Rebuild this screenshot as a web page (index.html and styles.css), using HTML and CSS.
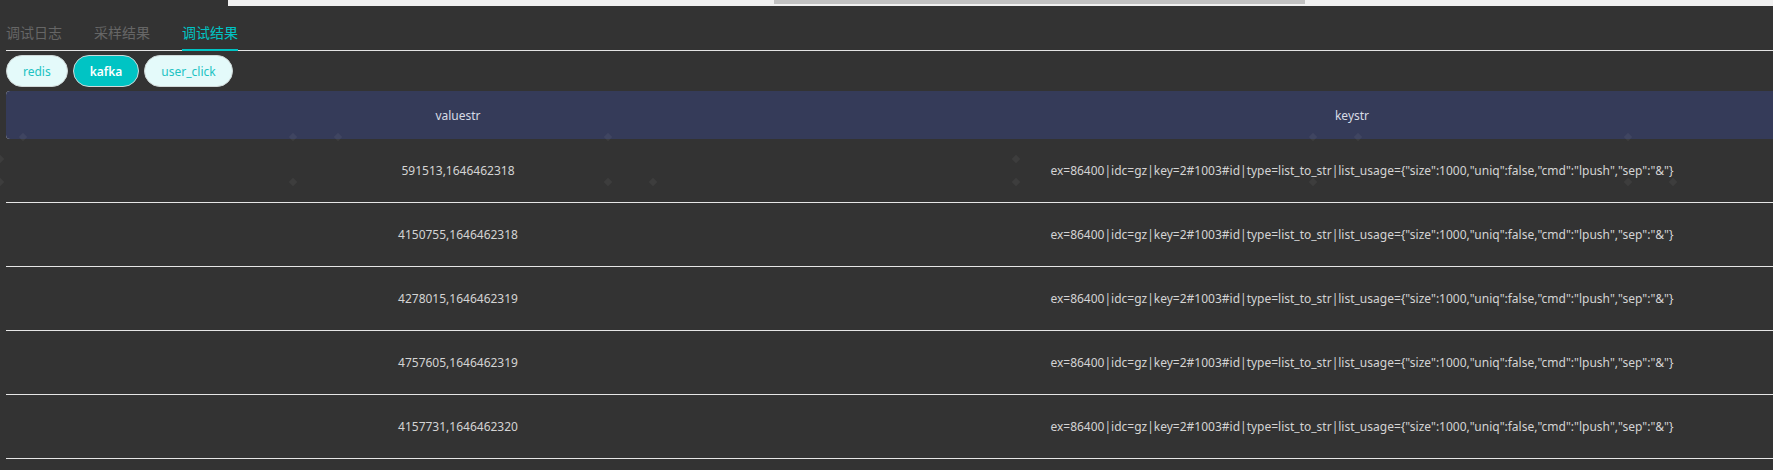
FILE: index.html
```html
<!DOCTYPE html>
<html lang="zh-CN">
<head>
  <meta charset="UTF-8" />
  <meta name="viewport" content="width=device-width, initial-scale=1.0"/>
  <title>调试结果</title>
  <link rel="stylesheet" href="styles.css">
</head>
<body>
  <div class="topbar">
    <div class="topbar-gap"></div>
    <div class="topbar-track"><div class="topbar-thumb"></div></div>
  </div>

  <div class="page">
    <div class="tabs">
      <div class="tab">调试日志</div>
      <div class="tab">采样结果</div>
      <div class="tab active">调试结果</div>
    </div>

    <div class="pills">
      <button class="pill">redis</button>
      <button class="pill active">kafka</button>
      <button class="pill">user_click</button>
    </div>

    <div class="table-wrap">
      <table class="result">
        <thead>
          <tr>
            <th>valuestr</th>
            <th>keystr</th>
          </tr>
        </thead>
        <tbody>
          <tr>
            <td>591513,1646462318</td>
            <td>ex=86400|idc=gz|key=2#1003#id|type=list_to_str|list_usage={"size":1000,"uniq":false,"cmd":"lpush","sep":"&amp;"}</td>
          </tr>
          <tr>
            <td>4150755,1646462318</td>
            <td>ex=86400|idc=gz|key=2#1003#id|type=list_to_str|list_usage={"size":1000,"uniq":false,"cmd":"lpush","sep":"&amp;"}</td>
          </tr>
          <tr>
            <td>4278015,1646462319</td>
            <td>ex=86400|idc=gz|key=2#1003#id|type=list_to_str|list_usage={"size":1000,"uniq":false,"cmd":"lpush","sep":"&amp;"}</td>
          </tr>
          <tr>
            <td>4757605,1646462319</td>
            <td>ex=86400|idc=gz|key=2#1003#id|type=list_to_str|list_usage={"size":1000,"uniq":false,"cmd":"lpush","sep":"&amp;"}</td>
          </tr>
          <tr>
            <td>4157731,1646462320</td>
            <td>ex=86400|idc=gz|key=2#1003#id|type=list_to_str|list_usage={"size":1000,"uniq":false,"cmd":"lpush","sep":"&amp;"}</td>
          </tr>
        </tbody>
      </table>
    </div>
  </div>

  <!-- faint background particles -->
  <div class="particles">
    <i style="left:23px;top:137px"></i>
    <i style="left:293px;top:137px"></i>
    <i style="left:338px;top:137px"></i>
    <i style="left:608px;top:137px"></i>
    <i style="left:0px;top:159px"></i>
    <i style="left:0px;top:182px"></i>
    <i style="left:293px;top:182px"></i>
    <i style="left:608px;top:182px"></i>
    <i style="left:653px;top:182px"></i>
    <i style="left:1016px;top:159px"></i>
    <i style="left:1016px;top:182px"></i>
    <i style="left:1313px;top:137px"></i>
    <i style="left:1358px;top:137px"></i>
    <i style="left:1313px;top:182px"></i>
    <i style="left:1628px;top:137px"></i>
    <i style="left:1628px;top:182px"></i>
    <i style="left:1673px;top:182px"></i>
  </div>
</body>
</html>
```

FILE: styles.css
```css
html, body {
  margin: 0;
  padding: 0;
  overflow: hidden;
}
body {
  font-family: "Noto Sans", "Noto Sans CJK SC", sans-serif;
  background-color: #333333;
  color: #d6d6d6;
  position: relative;
}
.topbar {
  display: flex;
  height: 6px;
}
.topbar-gap {
  width: 228px;
}
.topbar-track {
  flex: 1;
  background-color: #f0f0f0;
  padding-left: 546px;
}
.topbar-thumb {
  width: 531px;
  height: 4px;
  background-color: #c1c1c1;
}
.page {
  padding-left: 6px;
}
.tabs {
  display: flex;
  gap: 32px;
  height: 44px;
  border-bottom: 1px solid #e4e4e4;
}
.tab {
  font-family: "Noto Sans CJK SC", sans-serif;
  font-size: 14px;
  line-height: 14px;
  padding-top: 19px;
  color: #666666;
  box-sizing: border-box;
  height: 45px;
}
.tab.active {
  color: #00c4c4;
  border-bottom: 2px solid #00c4c4;
}
.pills {
  display: flex;
  gap: 5px;
  margin-top: 4px;
}
.pill {
  font-family: "Noto Sans", sans-serif;
  font-size: 12px;
  height: 32px;
  padding: 0 16px;
  border: 1px solid #cfd8d8;
  border-radius: 16px;
  background-color: #e4fafa;
  color: #20c2c2;
  cursor: pointer;
}
.pill.active {
  background-color: #00c4c4;
  color: #ffffff;
  font-weight: 600;
}
.table-wrap {
  margin-top: 4px;
  overflow: hidden;
}
.result {
  width: 1808px;
  table-layout: fixed;
  border-collapse: collapse;
  font-size: 12px;
}
.result thead tr {
  background-color: #ffffff;
}
.result th {
  height: 48px;
  padding: 0;
  background-color: #353b59;
  color: #d8dce6;
  font-weight: normal;
  text-align: center;
}
.result th:first-child {
  border-radius: 4px 0 0 4px;
}
.result th:last-child {
  padding-right: 20px;
}
.result td {
  height: 63px;
  padding: 0;
  text-align: center;
  border-bottom: 1px solid #e6e6e6;
  color: #d4d4d4;
  white-space: nowrap;
}
.particles {
  position: absolute;
  inset: 0;
  pointer-events: none;
}
.particles i {
  position: absolute;
  width: 6px;
  height: 6px;
  margin: -3px 0 0 -3px;
  background-color: rgba(255, 255, 255, 0.05);
  transform: rotate(45deg);
}
```
